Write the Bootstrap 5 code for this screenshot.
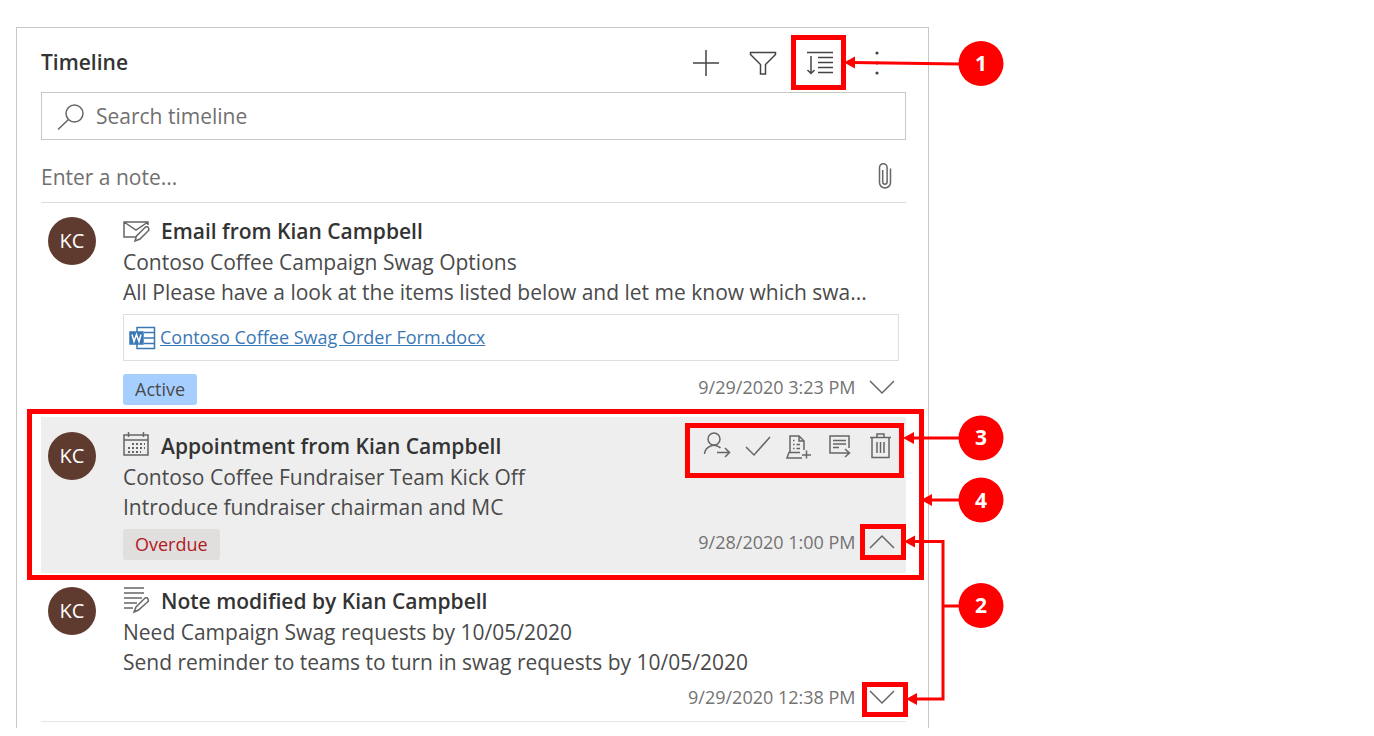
<!DOCTYPE html>
<html lang="en">
<head>
<meta charset="utf-8">
<meta name="viewport" content="width=device-width, initial-scale=1">
<title>Timeline</title>
<link href="https://cdn.jsdelivr.net/npm/bootstrap@5.3.0/dist/css/bootstrap.min.css" rel="stylesheet">
<style>
  body { font-family: "Open Sans", "Noto Sans", sans-serif; font-size: 21px; color: #4a4a4a; background: #fff; }
  svg { display: block; fill: none; stroke: #666; stroke-width: 1.5; }
  .page-area { padding: 27px 16px 8px; }
  .timeline-panel { width: 68%; min-width: 700px; border: 1px solid #c8c8c8; border-bottom: 0; padding: 0 22px 6px 24px; }
  .panel-head { height: 64px; padding-top: 6px; }
  .panel-head h1 { font-size: 21px; font-weight: 600; line-height: 28px; padding-bottom: 2px; color: #333; }
  .tool-btn { width: 57px; height: 57px; }
  .tool-btn svg { stroke: #444; }
  .bare-btn { border: 0; background: none; padding: 0; display: flex; align-items: center; justify-content: center; position: relative; }
  .bare-input { border: 0; outline: 0; background: none; padding: 0; color: #555; min-width: 0; }
  .bare-input::placeholder { color: #707070; opacity: 1; }
  .search-box { height: 48px; border: 1px solid #c8c8c8; padding: 2px 0 0 15px; gap: 11px; }
  .note-box { height: 63px; border-bottom: 1px solid #dcdcdc; padding: 14px 14px 0 0; }
  .entry { position: relative; padding: 12px 0 12px 7px; }
  .entry-active { background: #eee; padding: 13px 0 13px 7px; }
  .entry-last { border-bottom: 1px solid #e6e6e6; padding: 12px 0 6px 7px; }
  .avatar { width: 48px; height: 48px; margin: 2px 27px 0 0; border-radius: 50%; background: #5f3a2e; color: #fff; font-size: 20px; }
  .entry h2 { font-size: 21px; font-weight: 600; line-height: 32px; color: #333; }
  .entry-line { line-height: 31px; white-space: nowrap; }
  .entry-line + .entry-line { line-height: 28px; }
  .attachment { height: 47px; margin: 8px 7px 13px 0; border: 1px solid #dedede; padding-left: 5px; gap: 4px; font-size: 18px; }
  .attachment a { color: #3a78b5; }
  .attachment svg { stroke: #3a78b5; }
  .entry-foot { height: 31px; margin-top: 8px; }
  .status { height: 31px; line-height: 31px; padding: 0 12px; border-radius: 3px; font-size: 18px; background: #a6cfff; }
  .status-overdue { background: #e1dfdd; color: #b0181e; }
  .stamp { font-size: 18px; line-height: 26px; color: #737373; }
  .chevron { width: 46px; height: 26px; margin-left: 4px; }
  .action-bar { position: absolute; top: 8px; right: 4px; }
  .action-bar .bare-btn { width: 41px; height: 42px; }
  .mark-box { position: absolute; border: 5px solid red; pointer-events: none; }
  .mark-sort { inset: 0 3px 2px -1px; }
  .mark-chevron { inset: -5px 0; }
  .entry-last .mark-chevron { inset: -2px -2px -7px 2px; }
  .mark-actions { inset: -2px -2px -11px -12px; }
  .mark-entry { inset: -8px -18px -7px -14px; }
  .callouts { position: absolute; top: 0; left: calc(100% - 68px); pointer-events: none; stroke: red; stroke-width: 3; fill: none; overflow: visible; }
  .callouts .solid { fill: red; stroke: none; }
  .callouts text { fill: #fff; stroke: none; font-size: 21px; font-weight: 700; text-anchor: middle; }
</style>
</head>
<body>
<main class="page-area">
  <section class="timeline-panel position-relative">
    <header class="panel-head d-flex align-items-center justify-content-between">
      <h1 class="m-0">Timeline</h1>
      <div class="d-flex">
        <button class="bare-btn tool-btn" type="button" aria-label="Add"><svg width="28" height="28"><path d="M14 1v26M1 14h26"/></svg></button>
        <button class="bare-btn tool-btn" type="button" aria-label="Filter"><svg width="28" height="28"><path d="M1.500 3.500h25v2l-10 10v9.500h-5v-9.500l-10-10z"/></svg></button>
        <button class="bare-btn tool-btn" type="button" aria-label="Sort"><svg width="28" height="28"><path d="M1 3.500h26M12 8.500h15M12 13.500h15M12 18.500h15M12 23.500h15M5 7v17M1.500 21l3.500 3.500 3.500-3.500"/></svg><span class="mark-box mark-sort"></span></button>
        <button class="bare-btn tool-btn" type="button" aria-label="More"><svg width="28" height="28"><g fill="#444" stroke="none"><circle cx="14" cy="4" r="1.600"/><circle cx="14" cy="14" r="1.600"/><circle cx="14" cy="24" r="1.600"/></g></svg></button>
      </div>
    </header>

    <div class="search-box d-flex align-items-center">
      <svg width="28" height="28"><circle cx="17.500" cy="10.500" r="8.500"/><path d="M11.500 16.500L1 26.500"/></svg>
      <input class="bare-input flex-grow-1" type="search" placeholder="Search timeline" aria-label="Search timeline">
    </div>
    <div class="note-box d-flex align-items-center">
      <input class="bare-input flex-grow-1" type="text" placeholder="Enter a note..." aria-label="Enter a note">
      <button class="bare-btn mb-1" type="button" aria-label="Attach"><svg width="14" height="28"><path d="M12.500 6.500v14a5.500 5.500 0 0 1-11 0V5.500a3.800 3.800 0 0 1 7.600 0v14.500a2.200 2.200 0 0 1-4.400 0V8"/></svg></button>
    </div>

    <article class="entry d-flex">
      <div class="avatar flex-shrink-0 d-flex align-items-center justify-content-center">KC</div>
      <div class="flex-grow-1">
        <div class="d-flex align-items-center gap-2">
          <svg width="30" height="26"><path d="M13 19H1V4h24v3M1 4l12 8 12-8M12 23l1.500-5 9-9q2-1 3 1t-.5 3L17 21z"/></svg>
          <h2 class="m-0">Email from Kian Campbell</h2>
        </div>
        <div class="entry-line">Contoso Coffee Campaign Swag Options</div>
        <div class="entry-line">All Please have a look at the items listed below and let me know which swa...</div>
        <div class="attachment d-flex align-items-center">
          <svg width="27" height="24"><path d="M8 6V1.500h17.500v21H8V18M15 6.500h10.500M15 12h10.500M15 17.500h10.500"/><path d="M1 6h13v12H1z" fill="#3a78b5"/><path stroke="#fff" d="M3 8.500l2 7 2.500-7 2.500 7 2-7"/></svg>
          <a href="#">Contoso Coffee Swag Order Form.docx</a>
        </div>
        <div class="entry-foot d-flex">
          <span class="status me-auto">Active</span>
          <time class="stamp">9/29/2020 3:23 PM</time>
          <button class="bare-btn chevron" type="button" aria-label="Expand"><svg width="28" height="16"><path d="M1 2l12 12L25 2"/></svg></button>
        </div>
      </div>
    </article>

    <article class="entry entry-active d-flex">
      <div class="avatar flex-shrink-0 d-flex align-items-center justify-content-center">KC</div>
      <div class="flex-grow-1">
        <div class="d-flex align-items-center gap-2">
          <svg width="30" height="30"><path d="M1 4h24v20H1zM1 9h24M5.500 1v5M20.500 1v5"/><path stroke-dasharray="2 2" stroke-width="2" d="M9 13h13M5 17h17M5 21h13"/></svg>
          <h2 class="m-0">Appointment from Kian Campbell</h2>
        </div>
        <div class="entry-line">Contoso Coffee Fundraiser Team Kick Off</div>
        <div class="entry-line">Introduce fundraiser chairman and MC</div>
        <div class="entry-foot d-flex">
          <span class="status status-overdue me-auto">Overdue</span>
          <time class="stamp">9/28/2020 1:00 PM</time>
          <button class="bare-btn chevron" type="button" aria-label="Collapse"><svg width="28" height="16"><path d="M1 14L13 2l12 12"/></svg><span class="mark-box mark-chevron"></span></button>
        </div>
      </div>
      <span class="mark-box mark-entry"></span>
      <div class="action-bar d-flex">
        <button class="bare-btn" type="button" aria-label="Assign"><svg width="28" height="28"><circle cx="11" cy="7" r="6"/><path d="M1.500 22a9.500 9.500 0 0 1 16-6M14 20.500h12M22 16l4.500 4.500L22 25"/></svg></button>
        <button class="bare-btn" type="button" aria-label="Complete"><svg width="28" height="28"><path d="M2 15l8 8L26 5"/></svg></button>
        <button class="bare-btn" type="button" aria-label="Add to queue"><svg width="28" height="28"><path d="M5 20V4h9l5 5v9M14 4v5h5M15 20.500H4L2 26h15M17 23h9M21.500 18.500v8M8 8.500h1.500M8 12.500h1.500M11.500 12.500H15M8 16.500h1.500M11.500 16.500H15"/></svg></button>
        <button class="bare-btn" type="button" aria-label="Open record"><svg width="28" height="28"><path d="M13 21H4V4h19v12M7 8.500h13M7 12h13M7 15.500h6M12 21h11M19 17l4.500 4L19 25"/></svg></button>
        <button class="bare-btn" type="button" aria-label="Delete"><svg width="28" height="28"><path d="M5 5.500v20h17v-20M3 5.500h21M10 5.500V2h7v3.500M10 10v11M13.500 10v11M17 10v11"/></svg></button>
        <span class="mark-box mark-actions"></span>
      </div>
    </article>

    <article class="entry entry-last d-flex">
      <div class="avatar flex-shrink-0 d-flex align-items-center justify-content-center">KC</div>
      <div class="flex-grow-1">
        <div class="d-flex align-items-center gap-2">
          <svg width="30" height="30"><path d="M1 2h20M1 7h20M1 12h18M1 17h13M1 22h9M11 26l2-5 9-9q2-1 3 1t-.5 3l-9 8z"/></svg>
          <h2 class="m-0">Note modified by Kian Campbell</h2>
        </div>
        <div class="entry-line">Need Campaign Swag requests by 10/05/2020</div>
        <div class="entry-line">Send reminder to teams to turn in swag requests by 10/05/2020</div>
        <div class="entry-foot d-flex justify-content-end">
          <time class="stamp">9/29/2020 12:38 PM</time>
          <button class="bare-btn chevron" type="button" aria-label="Expand"><svg width="28" height="16"><path d="M1 2l12 12L25 2"/></svg><span class="mark-box mark-chevron"></span></button>
        </div>
      </div>
    </article>

    <svg class="callouts" width="150" height="700">
      <path d="M100 36L-8 34.500M100 410H50M100 472H70M52 513.500H83V671H54M83 578H100"/>
      <g class="solid">
        <path d="M-16 34.500l11-6v12zM43 410l11-6v12zM61 472l11-6v12zM44 513.500l11-6v12zM46 671l11-6v12z"/>
        <circle cx="121" cy="35.500" r="22.500"/><circle cx="121" cy="410" r="22.500"/><circle cx="121" cy="472" r="22.500"/><circle cx="121" cy="577.500" r="22.500"/>
      </g>
      <text x="121" y="43">1</text><text x="121" y="417">3</text><text x="121" y="480">4</text><text x="121" y="585">2</text>
    </svg>
  </section>
</main>
<script src="https://cdn.jsdelivr.net/npm/bootstrap@5.3.0/dist/js/bootstrap.bundle.min.js"></script>
</body>
</html>
